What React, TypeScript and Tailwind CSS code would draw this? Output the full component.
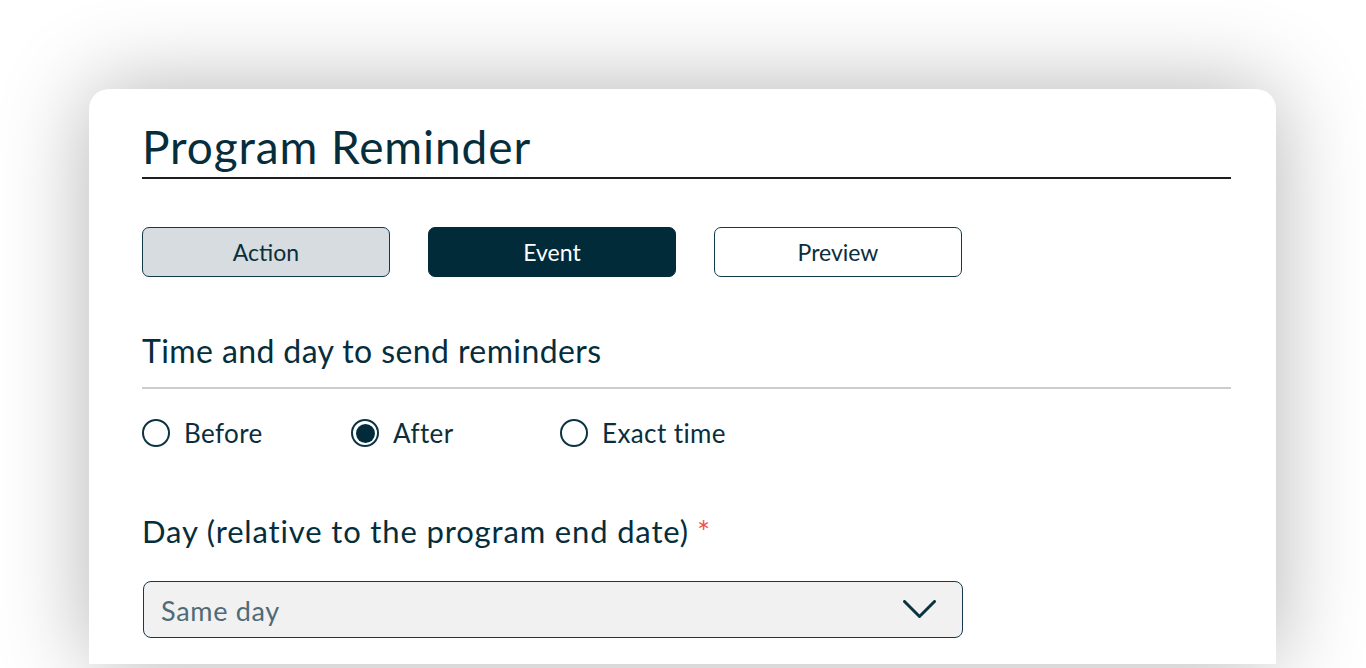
import React from "react";

function Radio({ label, checked }: { label: string; checked?: boolean }) {
  return (
    <div className="flex w-[209px] items-center gap-[14px]">
      <span className="flex h-[28px] w-[28px] shrink-0 items-center justify-center rounded-full border-2 border-[#0b3342] bg-white">
        {checked && <span className="h-[19px] w-[19px] rounded-full bg-[#022b3a]" />}
      </span>
      <span className="text-[26px] leading-[28px] tracking-[0.4px] text-[#0b2e3c]">{label}</span>
    </div>
  );
}

export default function App() {
  return (
    <div
      className="h-[668px] w-[1366px] overflow-hidden bg-white pl-[89px] pt-[89px]"
      style={{ fontFamily: "Lato, 'Open Sans', sans-serif" }}
    >
      <div className="h-[575px] w-[1187px] rounded-t-[20px] bg-white pl-[53px] pr-[45px] pt-[28px] shadow-[0_0_90px_rgba(0,0,0,0.3)]">
        <h1 className="border-b-2 border-[#1e1e1e] text-[46px] leading-[60px] tracking-[0.9px] text-[#062d3b]">
          Program Reminder
        </h1>

        <div className="mt-[48px] flex gap-[38px]">
          <button className="flex h-[50px] w-[248px] items-center justify-center rounded-[7px] border-[1.5px] border-[#123a4a] bg-[#d6dcdf] text-[23px] text-[#0b2e3c]">
            Action
          </button>
          <button className="flex h-[50px] w-[248px] items-center justify-center rounded-[7px] border-[1.5px] border-[#022b3a] bg-[#022b3a] text-[23px] text-white">
            Event
          </button>
          <button className="flex h-[50px] w-[248px] items-center justify-center rounded-[7px] border-[1.5px] border-[#123a4a] bg-white text-[23px] text-[#0b2e3c]">
            Preview
          </button>
        </div>

        <h2 className="mt-[54px] border-b-2 border-[#cdcdcd] pb-[16px] text-[32px] leading-[40px] tracking-[0.4px] text-[#062d3b]">
          Time and day to send reminders
        </h2>

        <div className="mt-[30px] flex items-center">
          <Radio label="Before" />
          <Radio label="After" checked />
          <Radio label="Exact time" />
        </div>

        <div className="mt-[64px] text-[31px] leading-[40px] tracking-[0.85px] text-[#062d3b]">
          Day (relative to the program end date)
          <span className="ml-[8px] text-[#f0524f]">*</span>
        </div>

        <div className="ml-px mt-[30px] flex h-[57px] w-[820px] items-center justify-between rounded-[8px] border border-[#17394a] bg-[#f1f1f1] pl-[17px] pr-[26px]">
          <span className="translate-y-[1px] text-[27px] leading-[32px] tracking-[0.7px] text-[#4f6b77]">Same day</span>
          <svg width="33" height="19" viewBox="0 0 33 19" fill="none">
            <path d="M1.5 1.5 L16.5 16.5 L31.5 1.5" stroke="#0b3342" strokeWidth="3" strokeLinecap="round" strokeLinejoin="round" />
          </svg>
        </div>
      </div>
    </div>
  );
}
